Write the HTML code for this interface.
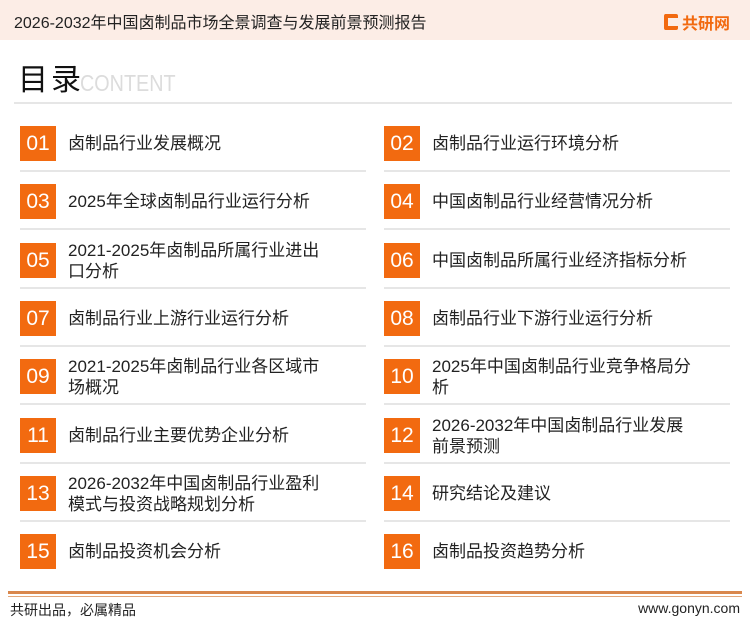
<!DOCTYPE html>
<html><head><meta charset="utf-8"><style>
*{margin:0;padding:0;box-sizing:border-box}
body{width:750px;height:622px;background:#fff;position:relative;overflow:hidden;font-family:"Liberation Sans","Noto Sans CJK SC",sans-serif;color:#222}
.hdr{position:absolute;left:0;top:0;width:750px;height:40px;background:#fcede6}
.hdr .t{position:absolute;left:14px;top:9px;font-size:16px;color:#222}
.logo{position:absolute;left:664px;top:10px;font-size:16px;font-weight:bold;color:#f26a10;display:flex;align-items:center}
.logo i{display:inline-block;width:14px;height:16px;border:4px solid #f26a10;border-right:none;margin-right:4px;border-radius:2px}
.ml{position:absolute;left:18px;top:63px;font-size:30px;color:#111;letter-spacing:3px;line-height:36px}
.ce{position:absolute;left:80px;top:70px;font-size:23px;color:#dcdcdc;transform:scaleX(0.86);transform-origin:left}
.hl{position:absolute;left:14px;top:102px;width:718px;height:2px;background:#e6e6e6}
.it{position:absolute;width:346px;height:58px}
.it .b{position:absolute;left:0;top:0;width:36px;height:35px;background:#f26a10;color:#fff;font-size:21px;text-align:center;line-height:35px}
.it .x{position:absolute;left:48px;top:0;height:35px;display:flex;align-items:center;font-size:17px;line-height:21px;width:300px;color:#222;white-space:nowrap}
.it .l{position:absolute;left:0;top:44px;width:346px;height:2px;background:#e6e6e6}
.f1{position:absolute;left:8px;top:591px;width:734px;height:3px;background:#d9874c}
.f2{position:absolute;left:8px;top:596px;width:734px;height:1px;background:#e3a77a}
.ft{position:absolute;left:10px;top:600px;font-size:14px;color:#222}
.fr{position:absolute;right:10px;top:600px;font-size:14px;color:#222}
</style></head><body>
<div class="hdr"><div class="t">2026-2032年中国卤制品市场全景调查与发展前景预测报告</div><div class="logo"><i></i>共研网</div></div>
<div class="ml">目录</div><div class="ce">CONTENT</div>
<div class="hl"></div>

<div class="it" style="left:20px;top:126px"><div class="b">01</div><div class="x">卤制品行业发展概况</div><div class="l"></div></div>
<div class="it" style="left:384px;top:126px"><div class="b">02</div><div class="x">卤制品行业运行环境分析</div><div class="l"></div></div>
<div class="it" style="left:20px;top:184px"><div class="b">03</div><div class="x">2025年全球卤制品行业运行分析</div><div class="l"></div></div>
<div class="it" style="left:384px;top:184px"><div class="b">04</div><div class="x">中国卤制品行业经营情况分析</div><div class="l"></div></div>
<div class="it" style="left:20px;top:243px"><div class="b">05</div><div class="x">2021-2025年卤制品所属行业进出<br>口分析</div><div class="l"></div></div>
<div class="it" style="left:384px;top:243px"><div class="b">06</div><div class="x">中国卤制品所属行业经济指标分析</div><div class="l"></div></div>
<div class="it" style="left:20px;top:301px"><div class="b">07</div><div class="x">卤制品行业上游行业运行分析</div><div class="l"></div></div>
<div class="it" style="left:384px;top:301px"><div class="b">08</div><div class="x">卤制品行业下游行业运行分析</div><div class="l"></div></div>
<div class="it" style="left:20px;top:359px"><div class="b">09</div><div class="x">2021-2025年卤制品行业各区域市<br>场概况</div><div class="l"></div></div>
<div class="it" style="left:384px;top:359px"><div class="b">10</div><div class="x">2025年中国卤制品行业竞争格局分<br>析</div><div class="l"></div></div>
<div class="it" style="left:20px;top:418px"><div class="b">11</div><div class="x">卤制品行业主要优势企业分析</div><div class="l"></div></div>
<div class="it" style="left:384px;top:418px"><div class="b">12</div><div class="x">2026-2032年中国卤制品行业发展<br>前景预测</div><div class="l"></div></div>
<div class="it" style="left:20px;top:476px"><div class="b">13</div><div class="x">2026-2032年中国卤制品行业盈利<br>模式与投资战略规划分析</div><div class="l"></div></div>
<div class="it" style="left:384px;top:476px"><div class="b">14</div><div class="x">研究结论及建议</div><div class="l"></div></div>
<div class="it" style="left:20px;top:534px"><div class="b">15</div><div class="x">卤制品投资机会分析</div></div>
<div class="it" style="left:384px;top:534px"><div class="b">16</div><div class="x">卤制品投资趋势分析</div></div>

<div class="f1"></div><div class="f2"></div>
<div class="ft">共研出品，必属精品</div><div class="fr">www.gonyn.com</div>
</body></html>
